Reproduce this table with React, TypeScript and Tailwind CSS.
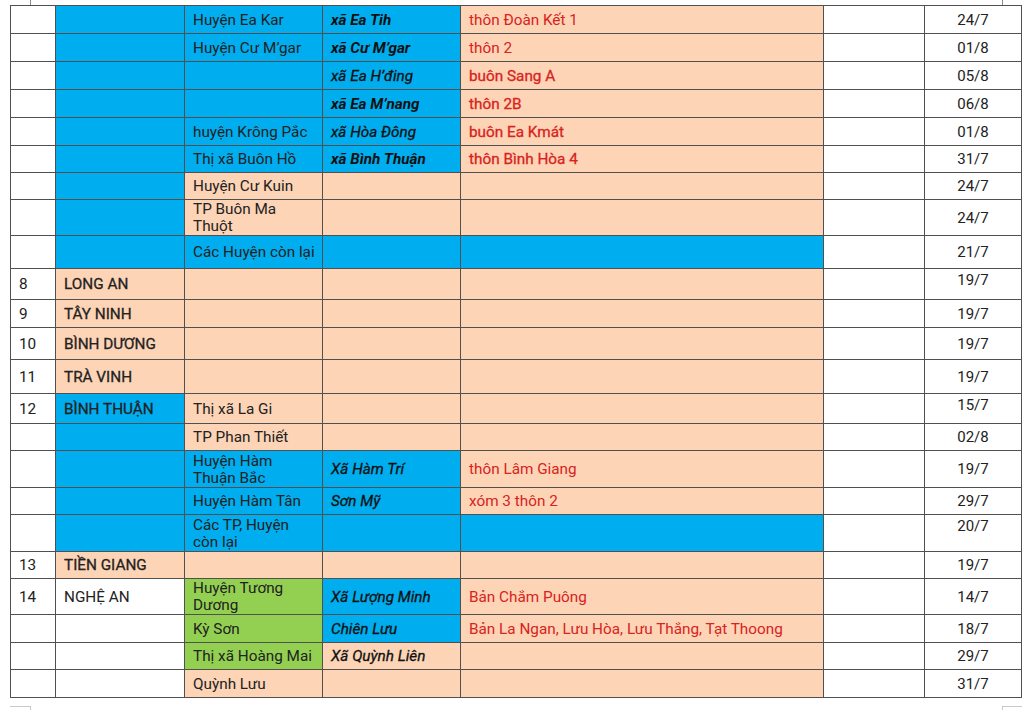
import React from "react"

type Bg = "w" | "b" | "p" | "g"

interface Cell {
  text?: React.ReactNode
  bg: Bg
  cls?: string
}

interface Row {
  h: number
  cells: Cell[]
  date: string
  dateTop?: boolean
}

const bgClass: Record<Bg, string> = {
  w: "bg-white",
  b: "bg-[#00adef]",
  p: "bg-[#fdd4b6]",
  g: "bg-[#93d051]",
}

// medium weight faked with a thin stroke (no 500 face installed)
const med = "[-webkit-text-stroke:0.3px_currentColor]"
const red = "text-[#d8231e]"
const redMed = `text-[#d8231e] ${med}`
const xa = "italic font-bold text-[#111]"
const xaMed = `italic text-[#111] ${med}`

const rows: Row[] = [
  { h: 28, date: "24/7", cells: [{ bg: "w" }, { bg: "b" }, { bg: "b", text: "Huyện Ea Kar" }, { bg: "b", text: "xã Ea Tih", cls: xa }, { bg: "p", text: "thôn Đoàn Kết 1", cls: red }] },
  { h: 28, date: "01/8", cells: [{ bg: "w" }, { bg: "b" }, { bg: "b", text: "Huyện Cư M’gar" }, { bg: "b", text: "xã Cư M’gar", cls: xa }, { bg: "p", text: "thôn 2", cls: red }] },
  { h: 28, date: "05/8", cells: [{ bg: "w" }, { bg: "b" }, { bg: "b" }, { bg: "b", text: "xã Ea H’đing", cls: xaMed }, { bg: "p", text: "buôn Sang A", cls: redMed }] },
  { h: 28, date: "06/8", cells: [{ bg: "w" }, { bg: "b" }, { bg: "b" }, { bg: "b", text: "xã Ea M’nang", cls: xa }, { bg: "p", text: "thôn 2B", cls: redMed }] },
  { h: 28, date: "01/8", cells: [{ bg: "w" }, { bg: "b" }, { bg: "b", text: "huyện Krông Pắc" }, { bg: "b", text: "xã Hòa Đông", cls: xaMed }, { bg: "p", text: "buôn Ea Kmát", cls: redMed }] },
  { h: 27, date: "31/7", cells: [{ bg: "w" }, { bg: "b" }, { bg: "b", text: "Thị xã Buôn Hồ" }, { bg: "b", text: "xã Bình Thuận", cls: xa }, { bg: "p", text: "thôn Bình Hòa 4", cls: redMed }] },
  { h: 27, date: "24/7", cells: [{ bg: "w" }, { bg: "b" }, { bg: "p", text: "Huyện Cư Kuin" }, { bg: "p" }, { bg: "p" }] },
  { h: 36, date: "24/7", cells: [{ bg: "w" }, { bg: "b" }, { bg: "p", text: <>TP Buôn Ma<br />Thuột</> }, { bg: "p" }, { bg: "p" }] },
  { h: 33, date: "21/7", cells: [{ bg: "w" }, { bg: "b" }, { bg: "b", text: "Các Huyện còn lại" }, { bg: "b" }, { bg: "b" }] },
  { h: 31, date: "19/7", dateTop: true, cells: [{ bg: "w", text: "8" }, { bg: "p", text: "LONG AN", cls: med }, { bg: "p" }, { bg: "p" }, { bg: "p" }] },
  { h: 28, date: "19/7", cells: [{ bg: "w", text: "9" }, { bg: "p", text: "TÂY NINH", cls: med }, { bg: "p" }, { bg: "p" }, { bg: "p" }] },
  { h: 32, date: "19/7", cells: [{ bg: "w", text: "10" }, { bg: "p", text: "BÌNH DƯƠNG", cls: med }, { bg: "p" }, { bg: "p" }, { bg: "p" }] },
  { h: 34, date: "19/7", cells: [{ bg: "w", text: "11" }, { bg: "p", text: "TRÀ VINH", cls: med }, { bg: "p" }, { bg: "p" }, { bg: "p" }] },
  { h: 30, date: "15/7", dateTop: true, cells: [{ bg: "w", text: "12" }, { bg: "b", text: "BÌNH THUẬN", cls: med }, { bg: "p", text: "Thị xã La Gi" }, { bg: "p" }, { bg: "p" }] },
  { h: 27, date: "02/8", cells: [{ bg: "w" }, { bg: "b" }, { bg: "p", text: "TP Phan Thiết" }, { bg: "p" }, { bg: "p" }] },
  { h: 37, date: "19/7", cells: [{ bg: "w" }, { bg: "b" }, { bg: "b", text: <>Huyện Hàm<br />Thuận Bắc</> }, { bg: "b", text: "Xã Hàm Trí", cls: xaMed }, { bg: "p", text: "thôn Lâm Giang", cls: red }] },
  { h: 27, date: "29/7", cells: [{ bg: "w" }, { bg: "b" }, { bg: "b", text: "Huyện Hàm Tân" }, { bg: "b", text: "Sơn Mỹ", cls: xaMed }, { bg: "p", text: "xóm 3 thôn 2", cls: red }] },
  { h: 37, date: "20/7", dateTop: true, cells: [{ bg: "w" }, { bg: "b" }, { bg: "b", text: <>Các TP, Huyện<br />còn lại</> }, { bg: "b" }, { bg: "b" }] },
  { h: 27, date: "19/7", cells: [{ bg: "w", text: "13" }, { bg: "p", text: "TIỀN GIANG", cls: med }, { bg: "p" }, { bg: "p" }, { bg: "p" }] },
  { h: 36, date: "14/7", cells: [{ bg: "w", text: "14" }, { bg: "w", text: "NGHỆ AN" }, { bg: "g", text: <>Huyện Tương<br />Dương</> }, { bg: "b", text: "Xã Lượng Minh", cls: xaMed }, { bg: "p", text: "Bản Chắm Puông", cls: red }] },
  { h: 28, date: "18/7", cells: [{ bg: "w" }, { bg: "w" }, { bg: "g", text: "Kỳ Sơn" }, { bg: "b", text: "Chiên Lưu", cls: xaMed }, { bg: "p", text: "Bản La Ngan, Lưu Hòa, Lưu Thắng, Tạt Thoong", cls: red }] },
  { h: 27, date: "29/7", cells: [{ bg: "w" }, { bg: "w" }, { bg: "g", text: "Thị xã Hoàng Mai" }, { bg: "p", text: "Xã Quỳnh Liên", cls: xaMed }, { bg: "p" }] },
  { h: 28, date: "31/7", cells: [{ bg: "w" }, { bg: "w" }, { bg: "p", text: "Quỳnh Lưu" }, { bg: "p" }, { bg: "p" }] },
]

const widths = [45, 129, 138, 138, 363, 101, 97]

export default function App() {
  return (
    <div
      className="flex flex-col w-[1029px] h-[710px] overflow-hidden bg-white text-[#222] text-[15.3px] leading-[17px]"
      style={{ fontFamily: "Roboto, 'Noto Sans', sans-serif" }}
    >
      {/* page corner marks, top */}
      <div className="flex h-[5px] shrink-0">
        <div className="w-[31px] border-r border-[#8a8a8a]" />
        <div className="flex-1" />
        <div className="w-[27px] border-l border-[#8a8a8a]" />
      </div>

      <table className="ml-[10px] table-fixed border-collapse w-[1011px]">
        <colgroup>
          {widths.map((w, i) => (
            <col key={i} style={{ width: w }} />
          ))}
        </colgroup>
        <tbody>
          {rows.map((row, ri) => (
            <tr key={ri} style={{ height: row.h }}>
              {row.cells.map((c, ci) => (
                <td
                  key={ci}
                  className={`border border-[#505050] px-2 pt-px pb-0 align-middle whitespace-nowrap ${bgClass[c.bg]} ${c.cls ?? ""}`}
                >
                  {c.text}
                </td>
              ))}
              <td className="border border-[#505050] bg-white" />
              <td
                className={`border border-[#505050] bg-white text-center text-[15px] ${
                  row.dateTop ? "align-top pt-[3px]" : "align-middle pt-px"
                }`}
              >
                {row.date}
              </td>
            </tr>
          ))}
        </tbody>
      </table>

      {/* page corner marks, bottom */}
      <div className="mt-[8px] flex h-[5px] shrink-0">
        <div className="ml-[10px] w-[21px] border-t border-r border-[#c8c8c8]" />
        <div className="flex-1" />
        <div className="mr-[7px] w-[20px] border-t border-l border-[#c8c8c8]" />
      </div>
    </div>
  )
}
